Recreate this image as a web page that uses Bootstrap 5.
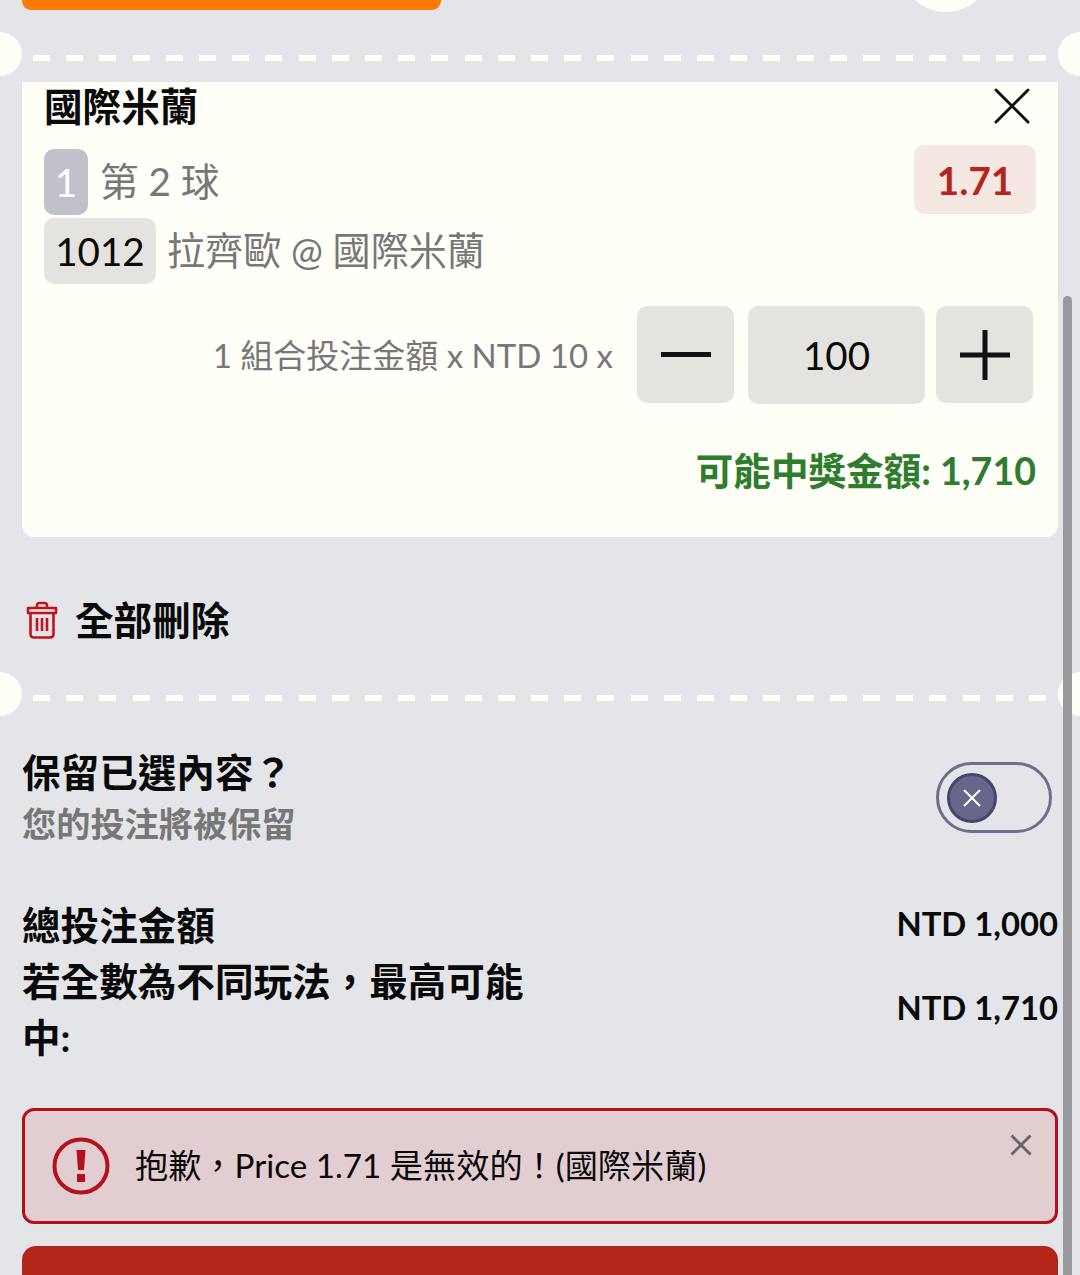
<!DOCTYPE html>
<html lang="zh-Hant">
<head>
    <meta charset="UTF-8">
    <meta name="viewport" content="width=device-width, initial-scale=1.0">
    <title>投注單</title>
    <link href="https://cdn.jsdelivr.net/npm/bootstrap@5.3.0/dist/css/bootstrap.min.css" rel="stylesheet">
    <style>
        body {
            background-color: #e3e5e8;
            font-family: Lato, "Noto Sans CJK TC", sans-serif;
            color: #0a0a0a;
            overflow: hidden;
        }
        .slip-page {
            position: relative;
            height: 1275px;
            overflow: hidden;
            padding: 0 22px;
        }
        .top-button {
            width: 419px;
            height: 10px;
            background-color: #ff7a00;
            border-radius: 0 0 9px 9px;
        }
        .top-circle {
            position: absolute;
            left: 900px;
            top: -80px;
            width: 92px;
            height: 92px;
            border-radius: 50%;
            background-color: #fffef7;
        }
        .scroll-thumb {
            position: absolute;
            left: 1063px;
            top: 296px;
            width: 9px;
            height: 990px;
            border-radius: 5px 5px 0 0;
            background-color: #98989d;
        }
        .ticket-dash {
            position: relative;
            height: 6px;
            margin: 0 -22px;
        }
        .ticket-dash::before {
            content: "";
            position: absolute;
            top: 0;
            height: 6px;
            background-image: repeating-linear-gradient(90deg, #fffef7 0 17px, transparent 17px 33.2px);
            left: 33px;
            width: 1014px;
        }
        .ticket-dash::after {
            content: "";
            position: absolute;
            top: -23px;
            left: -22px;
            width: 44px;
            height: 44px;
            border-radius: 50%;
            background-color: #fffef7;
            box-shadow: 1080px 0 0 #fffef7;
        }
        .dash-first { margin-top: 45px; margin-bottom: 21px; }
        .bet-card {
            background-color: #fffef7;
            height: 455px;
            padding: 0 22px;
            border-radius: 0 0 12px 12px;
        }
        .big-text { font-size: 38.6px; line-height: 48px; }
        .mid-text { font-size: 33px; }
        .grey-text { color: #777; }
        .bet-head { height: 48px; }
        .close-mark { margin-right: 6px; }
        .bet-row-one { margin-top: 15px; height: 69px; }
        .ball-tag {
            width: 44px;
            height: 66px;
            margin-top: 4px;
            background-color: #c0c1cb;
            color: #fffef7;
            border-radius: 10px;
        }
        .ball-label { margin-left: 12px; margin-top: 12px; }
        .odds-tag {
            width: 122px;
            height: 69px;
            background-color: #f5e8e3;
            color: #b5261a;
            font-weight: 700;
            border-radius: 10px;
        }
        .bet-row-two { margin-top: 4px; height: 66px; }
        .code-tag {
            width: 112px;
            height: 66px;
            background-color: #e4e3df;
            border-radius: 10px;
        }
        .match-label { margin-left: 11px; font-size: 38.1px; }
        .stake-row { margin-top: 22px; padding-right: 3px; }
        .stake-label { margin-right: 24px; line-height: 48px; }
        .step-btn, .step-value {
            height: 97px;
            background-color: #e4e3df;
            border: 0;
            border-radius: 10px;
            padding: 0;
        }
        .step-btn { width: 97px; }
        .step-value { width: 177px; margin: 0 11px 0 14px; height: 98px; }
        .win-line { margin-top: 43px; color: #2e7d2e; font-weight: 700; font-size: 37.6px; line-height: 48px; }
        .clear-row { margin-top: 59px; margin-left: 4px; margin-bottom: 51px; height: 48px; }
        .clear-row span { margin-left: 17px; }
        .keep-row { margin-top: 45px; height: 104px; }
        .keep-sub { line-height: 52px; font-weight: 700; font-size: 34.2px; }
        .keep-title { line-height: 52px; font-weight: 700; }
        .cancel-toggle {
            position: relative;
            width: 116px;
            height: 71px;
            margin-right: 6px;
            margin-top: 16px;
            border: 3px solid #6e6e8e;
            border-radius: 36px;
        }
        .cancel-knob {
            position: absolute;
            left: 8px;
            top: 8px;
            width: 50px;
            height: 50px;
            border-radius: 50%;
            background-color: #66678b;
            border: 3px solid #45466c;
        }
        .total-row { line-height: 56px; }
        .total-first { margin-top: 47px; }
        .total-label { width: 510px; font-weight: 700; font-size: 38.6px; }
        .total-value { font-size: 32.8px; font-weight: 700; margin-top: -2px; }
        .error-box {
            position: relative;
            margin: 43px 0 22px;
            height: 116px;
            padding: 0 0 0 27px;
            background-color: #e2ced1;
            border: 3px solid #b5111a;
            border-radius: 12px;
            color: #0a0a0a;
        }
        .error-text { margin-left: 25px; font-size: 33.2px; }
        .error-close {
            position: absolute;
            right: 23px;
            top: 23px;
            line-height: 0;
        }
        .bottom-button {
            height: 60px;
            background-color: #b5261a;
            border-radius: 14px;
        }
    </style>
</head>
<body>
    <div class="slip-page">
        <div class="top-circle"></div>
        <div class="top-button"></div>

        <div class="ticket-dash dash-first"></div>

        <!-- 投注卡 -->
        <div class="bet-card">
            <div class="bet-head d-flex justify-content-between align-items-center">
                <div class="big-text fw-bold">國際米蘭</div>
                <svg width="36" height="36" viewBox="0 0 36 36" class="close-mark" aria-hidden="true">
                    <path d="M2 2 34 34M34 2 2 34" stroke="#111" stroke-width="3" stroke-linecap="round"/>
                </svg>
            </div>
            <div class="bet-row-one d-flex justify-content-between align-items-start">
                <div class="d-flex">
                    <div class="ball-tag big-text d-flex align-items-center justify-content-center">1</div>
                    <div class="ball-label big-text grey-text">第 2 球</div>
                </div>
                <div class="odds-tag big-text d-flex align-items-center justify-content-center">1.71</div>
            </div>
            <div class="bet-row-two d-flex align-items-center">
                <div class="code-tag big-text d-flex align-items-center justify-content-center">1012</div>
                <div class="match-label grey-text">拉齊歐 @ 國際米蘭</div>
            </div>
            <div class="stake-row d-flex justify-content-end align-items-start">
                <div class="stake-label mid-text grey-text align-self-center">1 組合投注金額 x NTD 10 x</div>
                <button type="button" class="step-btn d-flex align-items-center justify-content-center" aria-label="減少">
                    <svg width="50" height="6" viewBox="0 0 50 6" aria-hidden="true"><rect width="50" height="5" y="0" fill="#111"/></svg>
                </button>
                <div class="step-value big-text d-flex align-items-center justify-content-center">100</div>
                <button type="button" class="step-btn d-flex align-items-center justify-content-center" aria-label="增加">
                    <svg width="50" height="50" viewBox="0 0 50 50" aria-hidden="true"><path d="M0 25H50M25 0V50" stroke="#111" stroke-width="5"/></svg>
                </button>
            </div>
            <div class="win-line text-end">可能中獎金額: 1,710</div>
        </div>

        <div class="clear-row d-flex align-items-center">
            <svg width="32" height="38" viewBox="0 0 32 38" aria-hidden="true">
                <g fill="none" stroke="#c2121a" stroke-width="2.6" stroke-linejoin="round">
                    <path d="M11 7V4.5Q11 2 13.5 2H18.5Q21 2 21 4.5V7"/>
                    <path d="M2 12V7H30V12Z"/>
                    <path d="M4.5 12V33Q4.5 36.500 8 36.500H24Q27.500 36.500 27.500 33V12"/>
                    <path d="M11 17V30M16 17V30M21 17V30"/>
                </g>
            </svg>
            <span class="big-text fw-bold">全部刪除</span>
        </div>

        <div class="ticket-dash"></div>

        <div class="keep-row d-flex justify-content-between align-items-start">
            <div>
                <div class="keep-title big-text">保留已選內容？</div>
                <div class="keep-sub grey-text">您的投注將被保留</div>
            </div>
            <div class="cancel-toggle">
                <div class="cancel-knob d-flex align-items-center justify-content-center">
                    <svg width="20" height="20" viewBox="0 0 20 20" aria-hidden="true"><path d="M2 2 18 18M18 2 2 18" stroke="#fff" stroke-width="2"/></svg>
                </div>
            </div>
        </div>

        <div class="total-row total-first d-flex justify-content-between align-items-center">
            <div class="total-label">總投注金額</div>
            <div class="total-value">NTD 1,000</div>
        </div>
        <div class="total-row d-flex justify-content-between align-items-center">
            <div class="total-label">若全數為不同玩法，最高可能中:</div>
            <div class="total-value">NTD 1,710</div>
        </div>

        <div class="error-box d-flex align-items-center">
            <svg width="58" height="58" viewBox="0 0 58 58" aria-hidden="true">
                <circle cx="29" cy="29" r="26.500" fill="none" stroke="#b5111a" stroke-width="4"/>
                <path d="M24.500 13H33.500L32 33H26Z" fill="#b5111a"/>
                <rect x="25" y="37" width="8" height="8" fill="#b5111a"/>
            </svg>
            <div class="error-text">抱歉，Price 1.71 是無效的！(國際米蘭)</div>
            <div class="error-close">
                <svg width="22" height="22" viewBox="0 0 22 22" aria-hidden="true"><path d="M1.500 1.500 20.500 20.500M20.500 1.500 1.500 20.500" stroke="#666" stroke-width="3"/></svg>
            </div>
        </div>

        <div class="bottom-button"></div>
        <div class="scroll-thumb"></div>
    </div>
    <script src="https://cdn.jsdelivr.net/npm/bootstrap@5.3.0/dist/js/bootstrap.bundle.min.js"></script>
</body>
</html>
